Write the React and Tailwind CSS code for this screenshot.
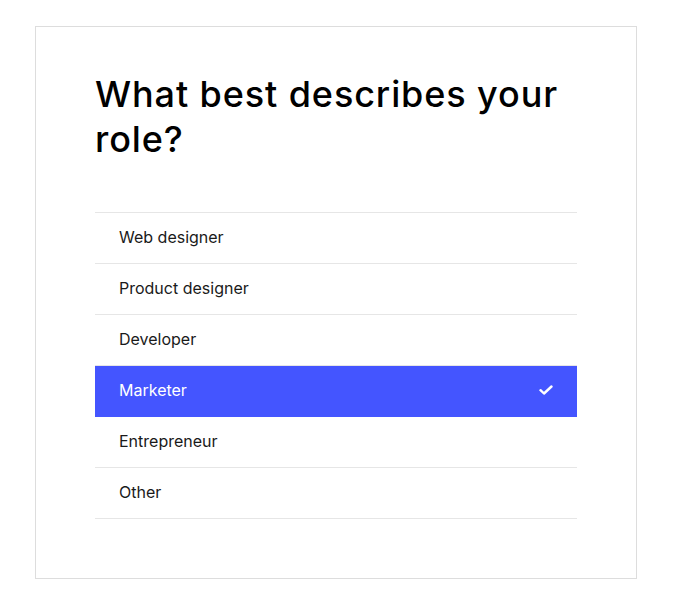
import React, { useState } from 'react';

const ROLES = ['Web designer', 'Product designer', 'Developer', 'Marketer', 'Entrepreneur', 'Other'];

function App() {
  const [selected, setSelected] = useState('Marketer');

  return (
    <div className="min-h-screen bg-white pt-[26px] pl-[35px] font-['Inter','Liberation_Sans',sans-serif]">
      <div className="w-[602px] h-[553px] border border-[#dddddd] bg-white px-[59px] pt-[45px]">
        <h1 className="text-[36px] leading-[45px] font-medium tracking-[0.9px] text-black">
          What best describes your role?
        </h1>

        <ul className="mt-[50px] border-t border-[#e6e6e6]">
          {ROLES.map(role => {
            const active = role === selected;
            return (
              <li key={role}>
                <button
                  onClick={() => setSelected(role)}
                  className={`w-full h-[51px] flex items-center justify-between pl-6 pr-6 pb-[2px] text-left text-[16px] border-b ${active ? 'bg-[#4455ff] border-[#4455ff] text-white' : 'bg-white border-[#e6e6e6] text-[#1a1a1a]'}`}
                >
                  <span>{role}</span>
                  {active && (
                    <svg width="14" height="10" viewBox="0 0 14 10" fill="none">
                      <path d="M1.5 5.2 L5 8.5 L12.5 1.5" stroke="white" strokeWidth="2.4" strokeLinecap="round" strokeLinejoin="round" />
                    </svg>
                  )}
                </button>
              </li>
            );
          })}
        </ul>
      </div>
    </div>
  );
}

export default App;
